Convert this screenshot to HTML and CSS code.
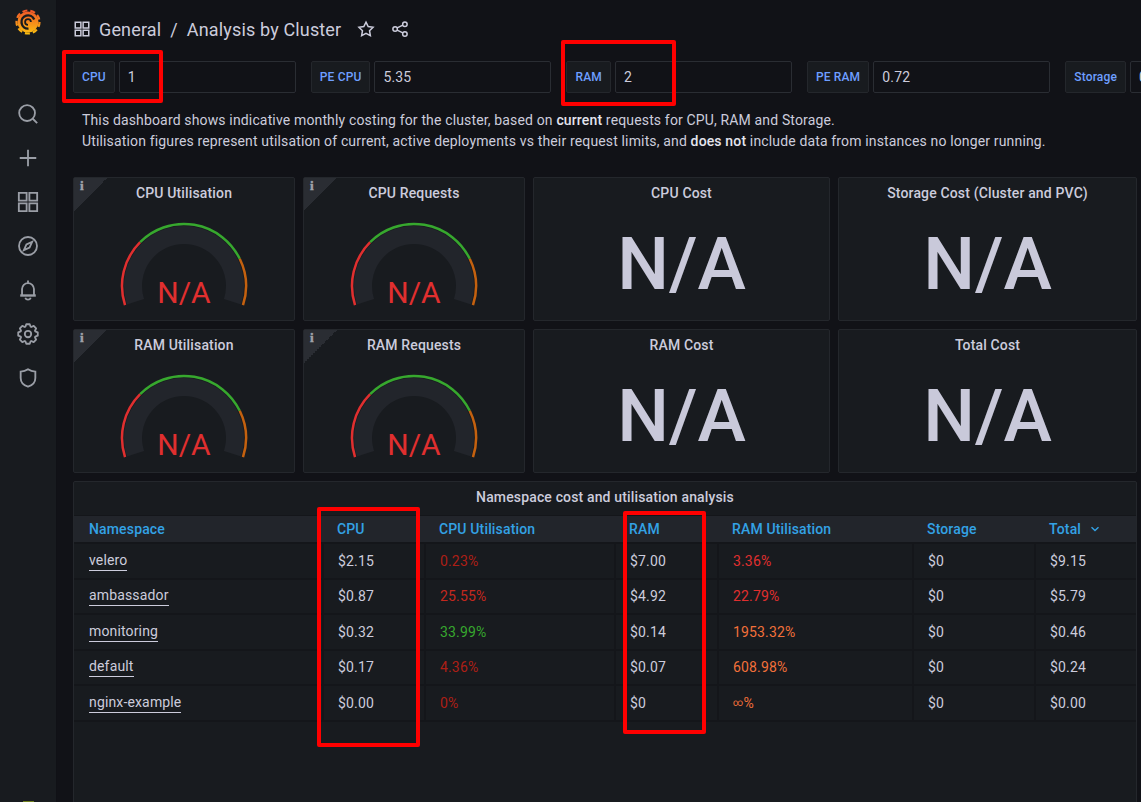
FILE: index.html
```html
<!DOCTYPE html>
<html lang="en">
<head>
    <meta charset="UTF-8">
    <title>Analysis by Cluster</title>
    <link rel="stylesheet" href="styles.css">
</head>
<body>

<nav class="sidebar">
    <svg class="logo" viewBox="0 0 28 28" width="28" height="28">
        <defs>
            <linearGradient id="logoFill" gradientUnits="userSpaceOnUse" x1="14" y1="1" x2="14" y2="27">
                <stop offset="0" stop-color="#f0502a"/>
                <stop offset="1" stop-color="#fbc30f"/>
            </linearGradient>
        </defs>
        <circle cx="14" cy="14" r="10.500" fill="url(#logoFill)"/>
        <circle cx="14" cy="14" r="11.500" fill="none" stroke="url(#logoFill)" stroke-width="2.200" stroke-dasharray="5 3.030"/>
        <path d="M20.200 11.500A6.600 6.600 0 1 0 14.500 20.600" fill="none" stroke="#181b1f" stroke-width="2.400"/>
        <path d="M14 16.900A2.900 2.900 0 1 1 16.900 14" fill="none" stroke="#181b1f" stroke-width="1.800"/>
    </svg>
    <div class="side-icons">
        <svg viewBox="0 0 24 24"><circle cx="11" cy="11" r="8.600"/><path d="M17.200 17.200L22 22"/></svg>
        <svg viewBox="0 0 24 24"><path d="M12 3v18M3 12h18"/></svg>
        <svg viewBox="0 0 24 24"><path d="M2 2h8.500v8.500H2zM13.500 2H22v8.500h-8.500zM2 13.500h8.500V22H2zM13.500 13.500H22V22h-8.500z"/></svg>
        <svg viewBox="0 0 24 24"><circle cx="12" cy="12" r="9.800"/><path d="M16.500 7.500l-2.800 6.200-6.200 2.800 2.800-6.200z"/></svg>
        <svg viewBox="0 0 24 24"><path d="M12 1.500v3M5.500 18v-7a6.500 6.500 0 0 1 13 0v7M9 20.500a3.200 3.200 0 0 0 6 0"/><path class="thick" d="M3.500 18h17"/></svg>
        <svg viewBox="0 0 24 24"><circle cx="12" cy="12" r="3.500"/><polygon class="cog" points="9.130,4.110 10.120,1.360 13.880,1.360 14.870,4.110 15.550,4.390 18.190,3.150 20.850,5.810 19.610,8.450 19.890,9.130 22.640,10.120 22.640,13.880 19.890,14.870 19.610,15.550 20.850,18.190 18.190,20.850 15.550,19.610 14.870,19.890 13.880,22.640 10.120,22.640 9.130,19.890 8.450,19.610 5.810,20.850 3.150,18.190 4.390,15.550 4.110,14.870 1.360,13.880 1.360,10.120 4.110,9.130 4.390,8.450 3.150,5.810 5.810,3.150 8.450,4.390"/></svg>
        <svg viewBox="0 0 24 24"><path d="M12 2.500c2.500 1.800 5 2.500 8 2.500v7c0 5-3.200 8-8 9.500C7.200 20 4 17 4 12V5c3 0 5.500-.7 8-2.500z"/></svg>
    </div>
    <div class="avatar"></div>
</nav>

<main class="main">
    <header class="topbar">
        <svg class="top-icon" viewBox="0 0 24 24"><path d="M3 3h7.500v7.500H3zM13.500 3H21v7.500h-7.500zM3 13.500h7.500V21H3zM13.500 13.500H21V21h-7.500z"/></svg>
        <span class="crumb">General</span>
        <span class="crumb-sep">/</span>
        <span class="crumb">Analysis by Cluster</span>
        <svg class="top-icon star" viewBox="0 0 24 24"><path d="M12 2.800l2.900 6 6.500.9-4.700 4.600 1.100 6.500-5.800-3.100-5.800 3.100 1.100-6.500-4.700-4.600 6.500-.9z"/></svg>
        <svg class="top-icon share" viewBox="0 0 24 24"><circle cx="18.500" cy="5.500" r="3"/><circle cx="5.500" cy="12" r="3"/><circle cx="18.500" cy="18.500" r="3"/><path d="M8.200 10.600l7.600-3.700M8.200 13.400l7.600 3.700"/></svg>
    </header>

    <section class="vars">
        <div class="var"><span class="var-label">CPU</span><span class="var-input">1</span></div>
        <div class="var"><span class="var-label">PE CPU</span><span class="var-input">5.35</span></div>
        <div class="var"><span class="var-label">RAM</span><span class="var-input">2</span></div>
        <div class="var"><span class="var-label">PE RAM</span><span class="var-input">0.72</span></div>
        <div class="var"><span class="var-label">Storage</span><span class="var-input">0.17</span></div>
    </section>

    <p class="intro">This dashboard shows indicative monthly costing for the cluster, based on <b>current</b> requests for CPU, RAM and Storage.<br>Utilisation figures represent utilsation of current, active deployments vs their request limits, and <b>does not</b> include data from instances no longer running.</p>

    <section class="panels">
        <div class="panel">
            <span class="corner"><i>i</i></span>
            <h2>CPU Utilisation</h2>
            <div class="gauge">
                <svg viewBox="0 0 130 90" width="130" height="90">
                    <path class="g-track" d="M16.500 80.760A51 51 0 1 1 113.500 80.760"/>
                    <path class="g-red" d="M6.030 84.160A62 62 0 0 1 21.160 21.160"/>
                    <path class="g-green" d="M21.160 21.160A62 62 0 0 1 120.730 37.820"/>
                    <path class="g-orange" d="M120.730 37.820A62 62 0 0 1 123.970 84.160"/>
                </svg>
                <span class="gauge-value">N/A</span>
            </div>
        </div>
        <div class="panel">
            <span class="corner"><i>i</i></span>
            <h2>CPU Requests</h2>
            <div class="gauge">
                <svg viewBox="0 0 130 90" width="130" height="90">
                    <path class="g-track" d="M16.500 80.760A51 51 0 1 1 113.500 80.760"/>
                    <path class="g-red" d="M6.030 84.160A62 62 0 0 1 21.160 21.160"/>
                    <path class="g-green" d="M21.160 21.160A62 62 0 0 1 120.730 37.820"/>
                    <path class="g-orange" d="M120.730 37.820A62 62 0 0 1 123.970 84.160"/>
                </svg>
                <span class="gauge-value">N/A</span>
            </div>
        </div>
        <div class="panel">
            <h2>CPU Cost</h2>
            <div class="stat">N/A</div>
        </div>
        <div class="panel">
            <h2>Storage Cost (Cluster and PVC)</h2>
            <div class="stat">N/A</div>
        </div>
        <div class="panel">
            <span class="corner"><i>i</i></span>
            <h2>RAM Utilisation</h2>
            <div class="gauge">
                <svg viewBox="0 0 130 90" width="130" height="90">
                    <path class="g-track" d="M16.500 80.760A51 51 0 1 1 113.500 80.760"/>
                    <path class="g-red" d="M6.030 84.160A62 62 0 0 1 21.160 21.160"/>
                    <path class="g-green" d="M21.160 21.160A62 62 0 0 1 120.730 37.820"/>
                    <path class="g-orange" d="M120.730 37.820A62 62 0 0 1 123.970 84.160"/>
                </svg>
                <span class="gauge-value">N/A</span>
            </div>
        </div>
        <div class="panel">
            <span class="corner"><i>i</i></span>
            <h2>RAM Requests</h2>
            <div class="gauge">
                <svg viewBox="0 0 130 90" width="130" height="90">
                    <path class="g-track" d="M16.500 80.760A51 51 0 1 1 113.500 80.760"/>
                    <path class="g-red" d="M6.030 84.160A62 62 0 0 1 21.160 21.160"/>
                    <path class="g-green" d="M21.160 21.160A62 62 0 0 1 120.730 37.820"/>
                    <path class="g-orange" d="M120.730 37.820A62 62 0 0 1 123.970 84.160"/>
                </svg>
                <span class="gauge-value">N/A</span>
            </div>
        </div>
        <div class="panel">
            <h2>RAM Cost</h2>
            <div class="stat">N/A</div>
        </div>
        <div class="panel">
            <h2>Total Cost</h2>
            <div class="stat">N/A</div>
        </div>
    </section>

    <section class="table-panel">
        <h2>Namespace cost and utilisation analysis</h2>
        <div class="t-head">
            <span>Namespace</span>
            <span>CPU</span>
            <span>CPU Utilisation</span>
            <span>RAM</span>
            <span>RAM Utilisation</span>
            <span>Storage</span>
            <span>Total <svg class="sort" viewBox="0 0 10 6"><path d="M1.500 1.200L5 4.500l3.500-3.300"/></svg></span>
        </div>
        <div class="t-row">
            <div><a>velero</a></div><div>$2.15</div><div class="low">0.23%</div><div>$7.00</div><div class="high">3.36%</div><div>$0</div><div>$9.15</div>
        </div>
        <div class="t-row">
            <div><a>ambassador</a></div><div>$0.87</div><div class="mid">25.55%</div><div>$4.92</div><div class="high">22.79%</div><div>$0</div><div>$5.79</div>
        </div>
        <div class="t-row">
            <div><a>monitoring</a></div><div>$0.32</div><div class="good">33.99%</div><div>$0.14</div><div class="over">1953.32%</div><div>$0</div><div>$0.46</div>
        </div>
        <div class="t-row">
            <div><a>default</a></div><div>$0.17</div><div class="low">4.36%</div><div>$0.07</div><div class="over">608.98%</div><div>$0</div><div>$0.24</div>
        </div>
        <div class="t-row">
            <div><a>nginx-example</a></div><div>$0.00</div><div class="low">0%</div><div>$0</div><div class="over"><small>∞</small>%</div><div>$0</div><div>$0.00</div>
        </div>
    </section>
</main>

<!-- rote Markierungen aus dem Screenshot -->
<div class="mark mark-cpu-var"></div>
<div class="mark mark-ram-var"></div>
<div class="mark mark-cpu-col"></div>
<div class="mark mark-ram-col"></div>

</body>
</html>
```

FILE: styles.css
```css
* {
    box-sizing: border-box;
}
body {
    font-family: Roboto, "Liberation Sans", sans-serif;
    font-size: 14px;
    letter-spacing: 0.15px;
    display: flex;
    height: 100vh;
    margin: 0;
    overflow: hidden;
    color: #ccccdc;
    background-color: #111217;
}
.sidebar {
    flex: 0 0 57px;
    display: flex;
    flex-direction: column;
    align-items: center;
    padding-top: 8px;
    background-color: #181b1f;
    border-right: 1px solid #101116;
}
.logo {
    display: block;
}
.side-icons {
    display: flex;
    flex-direction: column;
    align-items: center;
    gap: 22px;
    margin-top: 67px;
}
.side-icons svg {
    display: block;
    width: 22px;
    height: 22px;
    fill: none;
    stroke: #9a9ea6;
    stroke-width: 2;
}
.side-icons .thick {
    stroke-width: 2.6;
}
.side-icons .cog {
    stroke-linejoin: round;
}
.avatar {
    width: 11px;
    height: 1px;
    margin-top: auto;
    background-color: #6f7f1f;
}
.main {
    flex: 1;
    min-width: 0;
    padding: 0 4px 0 16px;
}
.topbar {
    display: flex;
    align-items: center;
    height: 58px;
    font-size: 18px;
}
.top-icon {
    width: 18px;
    height: 18px;
    fill: none;
    stroke: #ccccdc;
    stroke-width: 2;
}
.topbar > .top-icon:first-child {
    margin-right: 8px;
}
.crumb-sep {
    margin: 0 9px;
}
.star {
    margin-left: 16px;
}
.share {
    margin-left: 16px;
}
.vars {
    display: flex;
    gap: 15px;
    margin: 3px -4px 0 0;
    overflow: hidden;
}
.var {
    display: flex;
    flex-shrink: 0;
    gap: 4px;
}
.var-label {
    display: flex;
    align-items: center;
    height: 32px;
    padding: 0 8px;
    white-space: nowrap;
    font-size: 12px;
    font-weight: 500;
    color: #6e9fff;
    background-color: #181b1f;
    border: 1px solid #24272c;
    border-radius: 2px;
}
.var-input {
    display: flex;
    align-items: center;
    width: 177px;
    height: 32px;
    padding: 0 8px;
    background-color: #111217;
    border: 1px solid #2a2d33;
    border-radius: 2px;
}
.intro {
    margin: 17px 0 25px;
    padding-left: 9px;
    line-height: 21px;
}
.intro b {
    font-weight: 500;
    color: #e4e4ee;
}
.panels {
    display: grid;
    grid-template-columns: 222px 222px 297px 299px;
    grid-auto-rows: 144px;
    gap: 8px;
}
.panel {
    position: relative;
    display: flex;
    flex-direction: column;
    align-items: center;
    background-color: #181b1f;
    border: 1px solid #24272c;
    border-radius: 2px;
}
h2 {
    margin: 0;
    font-size: 14px;
    font-weight: 500;
    line-height: 30px;
    text-align: center;
}
.corner {
    position: absolute;
    top: 0;
    left: 0;
    width: 33px;
    height: 33px;
    background: linear-gradient(135deg, #2a2d33 50%, transparent 50%);
}
.corner i {
    position: absolute;
    top: 1px;
    left: 6px;
    font: bold 13px/14px "Liberation Serif", serif;
    -webkit-text-stroke: 0.5px #a0a4ab;
    color: #a0a4ab;
}
.gauge {
    position: relative;
    width: 130px;
    height: 90px;
    margin-top: 13px;
}
.gauge svg {
    display: block;
    fill: none;
}
.g-track {
    stroke: #22252b;
    stroke-width: 18;
}
.g-red, .g-green, .g-orange {
    stroke-width: 2.5;
}
.g-red {
    stroke: #e02f2f;
}
.g-green {
    stroke: #37a82e;
}
.g-orange {
    stroke: #c4610f;
}
.gauge-value {
    position: absolute;
    top: 52px;
    left: 0;
    right: 0;
    font-size: 30px;
    letter-spacing: 0;
    line-height: 40px;
    text-align: center;
    color: #e02f2f;
}
.stat {
    margin-top: 20px;
    font-size: 73px;
    font-weight: 500;
    letter-spacing: 0;
    line-height: 73px;
    color: #c9c9da;
}
.table-panel {
    width: 1064px;
    height: 340px;
    margin-top: 8px;
    background-color: #181b1f;
    border: 1px solid #24272c;
    border-radius: 2px;
}
.t-head, .t-row {
    display: grid;
    grid-template-columns: 248px 102px 190px 103px 195px 122px 102px;
}
.t-head {
    align-items: center;
    height: 29px;
    margin-top: 3px;
    padding-bottom: 1px;
    background-color: #22252b;
    border-top: 1px solid #14161a;
    border-bottom: 2px solid #14161a;
    font-weight: 500;
    color: #33a2e5;
}
.t-head span {
    padding-left: 15px;
}
.sort {
    width: 10px;
    height: 6px;
    margin-left: 5px;
    vertical-align: 2px;
    fill: none;
    stroke: #33a2e5;
    stroke-width: 1.4;
}
.t-row {
    height: 35.5px;
    border-bottom: 2px solid #14161a;
}
.t-row > div {
    display: flex;
    align-items: center;
    padding-left: 14px;
    border-left: 2px solid #14161a;
}
.t-row > div:first-child {
    padding-left: 15px;
    border-left: none;
}
.t-row a {
    border-bottom: 1px solid #ccccdc;
    line-height: 19px;
}
.t-row small {
    font-size: 10px;
}
.low {
    color: #ad1f16;
}
.mid {
    color: #c4281e;
}
.high {
    color: #e02f2f;
}
.good {
    color: #37a82e;
}
.over {
    color: #f2703a;
}
.mark {
    position: absolute;
    border: 4px solid #ff0000;
    border-radius: 2px;
}
.mark-cpu-var {
    top: 50px;
    left: 62px;
    width: 101px;
    height: 53px;
}
.mark-ram-var {
    top: 40px;
    left: 561px;
    width: 115px;
    height: 66px;
}
.mark-cpu-col {
    top: 507px;
    left: 317px;
    width: 103px;
    height: 240px;
}
.mark-ram-col {
    top: 511px;
    left: 623px;
    width: 83px;
    height: 223px;
}
```
